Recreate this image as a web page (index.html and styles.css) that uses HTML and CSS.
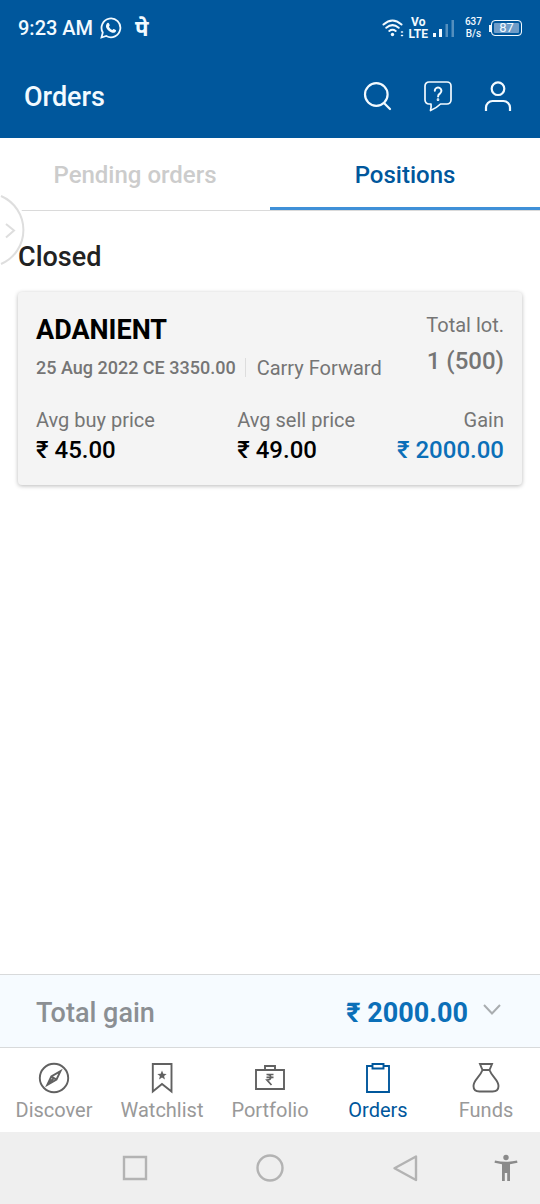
FILE: index.html
```html
<!DOCTYPE html>
<html lang="en">
<head>
<meta charset="utf-8">
<meta name="viewport" content="width=device-width, initial-scale=1">
<title>Orders</title>
<link rel="stylesheet" href="styles.css">
</head>
<body>
<div class="status-bar">
  <div class="status-left">
    <span class="clock">9:23 AM</span>
    <svg class="whatsapp" width="22" height="22" viewBox="0 0 22 22" fill="none" stroke="currentColor" stroke-width="1.8" aria-hidden="true">
      <path d="M1.500 20.500l1.300-5A9.400 9.400 0 1 1 6.300 19z"/>
      <path fill="currentColor" stroke="none" d="M7.400 6.100c.5-.5 1.200-.4 1.500.2l.8 1.800c.1.400 0 .7-.8 1.600.8 1.600 1.900 2.600 3.500 3.300.8-.9 1-1.200 1.500-1l1.800.9c.5.300.5.700.2 1.400-.6 1.400-2.300 1.800-3.700 1.400-3-.9-5.200-3-6.100-5.500-.4-1.400.2-3.100 1.300-4.100z"/>
    </svg>
    <span class="phonepe" lang="hi">पे</span>
  </div>
  <div class="status-right">
    <svg width="22" height="20" viewBox="0 0 22 20" fill="none" stroke="currentColor" stroke-width="2" stroke-linecap="round" aria-hidden="true">
      <path d="M1.500 6.500Q10.500-1.500 19.500 6.500M4.300 9.800Q10.500 4.500 16.700 9.800M7.300 13Q10.500 10.500 13.700 13"/>
      <circle cx="10.500" cy="16.500" r="1.700" fill="currentColor" stroke="none"/>
      <path d="M19.500 14h1M19.500 17.500h1" stroke-width="1.500"/>
    </svg>
    <span class="volte"><span>Vo</span><span>LTE</span></span>
    <svg width="22" height="18" viewBox="0 0 22 18" fill="currentColor" aria-hidden="true">
      <path d="M0 14h3v4H0zM6 10h3v8H6z"/>
      <path opacity=".35" d="M12.500 5h2.500v13h-2.500zM18.500 1h2.500v17h-2.500z"/>
    </svg>
    <span class="speed"><span>637</span><span>B/s</span></span>
    <span class="battery"><span class="battery-level">87</span></span>
  </div>
</div>

<header class="app-bar">
  <h1 class="app-title">Orders</h1>
  <div class="app-actions">
    <button class="icon-button" type="button" aria-label="Search">
      <svg width="30" height="32" viewBox="0 0 30 32" fill="none" stroke="currentColor" stroke-width="2.200" stroke-linecap="round"><circle cx="13.300" cy="13.500" r="11.300"/><path d="M21 22l6 6"/></svg>
    </button>
    <button class="icon-button" type="button" aria-label="Help">
      <svg width="30" height="32" viewBox="0 0 30 32" fill="none" stroke="currentColor" stroke-width="1.700" stroke-linejoin="round" stroke-linecap="round"><path d="M6 1h18a4 4 0 0 1 4 4v14a4 4 0 0 1-4 4H17.500Q13 27.500 7.500 29.500Q8.500 26 8 23H6a4 4 0 0 1-4-4V5a4 4 0 0 1 4-4z"/><path stroke-width="2" d="M11.800 9.800a3.300 3.300 0 1 1 5.300 2.600c-1.400 1-2 1.500-2 3"/><circle cx="15" cy="18.700" r=".5"/></svg>
    </button>
    <button class="icon-button" type="button" aria-label="Profile">
      <svg width="30" height="32" viewBox="0 0 30 32" fill="none" stroke="currentColor" stroke-width="2.200"><circle cx="15" cy="7.700" r="6.300"/><path d="M3 30v-3.500a6.500 6.500 0 0 1 6.500-6.500h11a6.500 6.500 0 0 1 6.500 6.500V30"/></svg>
    </button>
  </div>
</header>

<nav class="tabs" aria-label="Order views">
  <button class="tab" type="button">Pending orders</button>
  <button class="tab tab-active" type="button" aria-current="true">Positions</button>
  <button class="edge-handle" type="button" aria-label="Open side panel">
    <svg width="25" height="70" viewBox="0 0 25 70" fill="none">
      <path class="handle-face" d="M0 0A36 36 0 0 1 0 70z"/>
      <path class="handle-ring" d="M1 1A37 37 0 0 1 1 69M6 29l8 6.500-8 7"/>
    </svg>
  </button>
</nav>

<main class="content">
  <h2 class="section-title">Closed</h2>
  <article class="card">
    <div class="card-head">
      <div class="instrument">
        <h3 class="symbol">ADANIENT</h3>
        <p class="contract"><span class="expiry">25 Aug 2022 CE 3350.00</span><span class="product">Carry Forward</span></p>
      </div>
      <div class="lots"><span class="label">Total lot.</span><span class="lot-value">1 (500)</span></div>
    </div>
    <dl class="prices">
      <div><dt class="label">Avg buy price</dt><dd class="price">₹ 45.00</dd></div>
      <div><dt class="label">Avg sell price</dt><dd class="price">₹ 49.00</dd></div>
      <div class="gain"><dt class="label">Gain</dt><dd class="price">₹ 2000.00</dd></div>
    </dl>
  </article>
</main>

<button class="total" type="button">
  <span class="total-label">Total gain</span>
  <span class="total-value">₹ 2000.00</span>
  <svg width="18" height="12" viewBox="0 0 18 12" fill="none" stroke="#a9adb0" stroke-width="2" aria-hidden="true"><path d="M1 1l8 8.500L17 1"/></svg>
</button>

<nav class="bottom-nav" aria-label="Main">
  <a class="nav-item" href="#discover">
    <svg width="32" height="32" viewBox="0 0 32 32"><circle cx="16" cy="16" r="14.200"/><path d="M22.500 9.200L18.500 17.500 9.300 22.800 13.300 14.500zM13.300 14.500l5.200 3M9.300 22.800l6.600-6.800"/></svg>
    <span>Discover</span>
  </a>
  <a class="nav-item" href="#watchlist">
    <svg width="32" height="32" viewBox="0 0 32 32"><path d="M6.800 2h18.700v27.500L16 22l-9.200 7.500z"/><path class="solid" d="M16 8.500l1.300 3.200 3.400.2-2.600 2.200.8 3.300-2.900-1.800-2.900 1.800.8-3.300-2.600-2.200 3.400-.2z"/></svg>
    <span>Watchlist</span>
  </a>
  <a class="nav-item" href="#portfolio">
    <svg width="32" height="32" viewBox="0 0 32 32"><path d="M2 8h28v19H2zM11 8V4h10v4"/><path stroke-width="1.700" d="M12.500 12.500h7M12.500 15.300h7M13 12.500c5 0 5 5.500 0 5.500l4.500 5"/></svg>
    <span>Portfolio</span>
  </a>
  <a class="nav-item nav-active" href="#orders" aria-current="page">
    <svg width="32" height="32" viewBox="0 0 32 32"><path d="M10.500 4H5v26h22V4h-5.500M10.500 2h11v4.500h-11z"/></svg>
    <span>Orders</span>
  </a>
  <a class="nav-item" href="#funds">
    <svg width="32" height="32" viewBox="0 0 32 32"><path d="M10 2h12l-2.500 6h-7zM12.500 8C10 15 3.500 18 3.500 24q0 5.500 6 5.500h13q6 0 6-5.500C28.500 18 22 15 19.500 8z"/></svg>
    <span>Funds</span>
  </a>
</nav>

<div class="system-nav">
  <span class="spacer"></span>
  <button class="icon-button" type="button" aria-label="Recent apps"><svg width="28" height="28" viewBox="0 0 28 28"><path d="M3 3h22v22H3z"/></svg></button>
  <button class="icon-button" type="button" aria-label="Home"><svg width="28" height="28" viewBox="0 0 28 28"><circle cx="14" cy="14" r="12.500"/></svg></button>
  <button class="icon-button" type="button" aria-label="Back"><svg width="28" height="28" viewBox="0 0 28 28"><path stroke-linejoin="round" d="M25 2.500v23.500L3.500 14.200z"/></svg></button>
  <button class="icon-button access" type="button" aria-label="Accessibility"><svg width="28" height="28" viewBox="0 0 28 28"><circle cx="14" cy="3.500" r="2.700"/><path d="M3 6.500q11 2.500 22 0l.5 2.300q-4 1-7.500 1.400V27h-2.800v-8h-2.400v8H10V10.200q-3.500-.4-7.500-1.400z"/></svg></button>
</div>
</body>
</html>
```

FILE: styles.css
```css
* {
  box-sizing: border-box;
}

body {
  margin: 0;
  min-height: 100vh;
  display: flex;
  flex-direction: column;
  background: #fff;
  color: #000;
  font-family: Roboto, "Liberation Sans", sans-serif;
}

h1, h2, h3, p, dl, dd {
  margin: 0;
}

button {
  border: 0;
  padding: 0;
  background: none;
  color: inherit;
  font: inherit;
}

svg {
  display: block;
  flex: none;
}

.status-bar {
  display: flex;
  justify-content: space-between;
  align-items: center;
  height: 56px;
  padding: 0 18px;
  background: #00579c;
  color: #f2faff;
}

.status-left {
  display: flex;
  align-items: center;
  gap: 7px;
}

.clock {
  font-size: 20px;
  font-weight: 500;
}

.phonepe {
  margin-left: 6px;
  padding-top: 6px;
  font-family: "Noto Sans Devanagari", "Noto Sans", sans-serif;
  font-size: 22px;
  font-weight: 700;
  line-height: 28px;
}

.status-right {
  display: flex;
  align-items: center;
  gap: 5px;
}

.volte,
.speed {
  display: flex;
  flex-direction: column;
  align-items: center;
}

.volte {
  font-size: 12px;
  font-weight: 700;
  line-height: 12px;
}

.speed {
  margin: 0 2px 0 5px;
  font-size: 10px;
  font-weight: 500;
  line-height: 12px;
}

.battery {
  display: flex;
  align-items: center;
}

.battery::before {
  content: "";
  width: 2px;
  height: 7px;
  background: currentColor;
}

.battery-level {
  width: 31px;
  border: 1px solid currentColor;
  border-radius: 4px;
  background: #6e9cc8;
  box-shadow: inset 0 0 0 2px #00579c;
  font-size: 13px;
  line-height: 14px;
  text-align: center;
}

.app-bar {
  display: flex;
  justify-content: space-between;
  align-items: center;
  height: 82px;
  padding: 0 27px 0 24px;
  background: #00579c;
  color: #f2faff;
}

.app-title {
  font-size: 27px;
  font-weight: 500;
}

.app-actions {
  display: flex;
  gap: 30px;
}

.icon-button {
  display: flex;
  justify-content: center;
}

.tabs {
  position: relative;
  display: grid;
  grid-template-columns: 1fr 1fr;
  height: 73px;
  border-bottom: 1px solid #dadada;
}

.tab {
  padding-top: 4px;
  border-bottom: 3px solid transparent;
  color: #ccc;
  font-size: 24px;
  font-weight: 500;
}

.tab-active {
  border-color: #3f90d8;
  color: #00579c;
}

.edge-handle {
  position: absolute;
  top: 57px;
  left: 0;
}

.handle-face {
  fill: #fff;
}

.handle-ring {
  stroke: #dedede;
  stroke-width: 2;
}

.content {
  position: relative;
  flex: 1;
  padding: 30px 18px;
}

.section-title {
  margin-bottom: 19px;
  color: #222;
  font-size: 27px;
  font-weight: 500;
  line-height: 32px;
}

.card {
  padding: 21px 18px;
  border-radius: 4px;
  background: #f4f4f4;
  box-shadow: 0 1px 4px rgba(0, 0, 0, 0.28);
}

.card-head {
  display: flex;
  justify-content: space-between;
}

.symbol {
  font-size: 27px;
  font-weight: 700;
  line-height: 34px;
}

.contract {
  display: flex;
  align-items: center;
  margin-top: 9px;
  color: #757575;
  line-height: 24px;
}

.expiry {
  padding-right: 9px;
  font-size: 18px;
  font-weight: 500;
}

.product {
  position: relative;
  padding-left: 12px;
  font-size: 20px;
}

.product::before {
  content: "";
  position: absolute;
  top: 2px;
  bottom: 3px;
  left: 0;
  border-left: 1px solid #ddd;
}

.label {
  color: #757575;
  font-size: 20px;
  font-weight: 400;
  line-height: 24px;
}

.lots {
  display: flex;
  flex-direction: column;
  gap: 10px;
  align-items: flex-end;
}

.lot-value {
  color: #757575;
  font-size: 24px;
  font-weight: 500;
  line-height: 28px;
}

.prices {
  display: grid;
  grid-template-columns: 43% 1fr auto;
  margin-top: 28px;
}

.price {
  margin-top: 4px;
  font-size: 24px;
  font-weight: 500;
  line-height: 28px;
}

.gain {
  text-align: right;
}

.gain .price {
  color: #0b6fb8;
}

.total {
  display: flex;
  align-items: center;
  height: 74px;
  padding: 4px 39px 0 36px;
  border-top: 1px solid #d8dadb;
  border-bottom: 1px solid #d8dadb;
  background: #f6fbff;
  text-align: left;
}

.total svg {
  margin-bottom: 6px;
}

.total-label {
  flex: 1;
  color: #8b8f93;
  font-size: 27px;
  font-weight: 500;
}

.total-value {
  margin-right: 15px;
  color: #0b6fb8;
  font-size: 27px;
  font-weight: 700;
}

.bottom-nav {
  display: grid;
  grid-template-columns: repeat(5, 1fr);
  height: 84px;
  padding-top: 14px;
}

.nav-item {
  display: flex;
  flex-direction: column;
  align-items: center;
  gap: 4px;
  color: #999;
  font-size: 20px;
  line-height: 24px;
  text-decoration: none;
}

.nav-item svg {
  fill: none;
  stroke: #616161;
  stroke-width: 1.9;
}

.nav-item .solid {
  fill: #616161;
  stroke: none;
}

.nav-item.nav-active {
  color: #00579c;
}

.nav-active svg {
  stroke: #00579c;
}

.system-nav {
  display: grid;
  grid-template-columns: 1fr 2fr 2fr 2fr 1fr;
  align-items: center;
  height: 72px;
  background: #efefef;
}

.system-nav svg {
  fill: none;
  stroke: #b3b3b3;
  stroke-width: 2.4;
}

.system-nav .access svg {
  fill: #8a8a8a;
  stroke: none;
}
```
